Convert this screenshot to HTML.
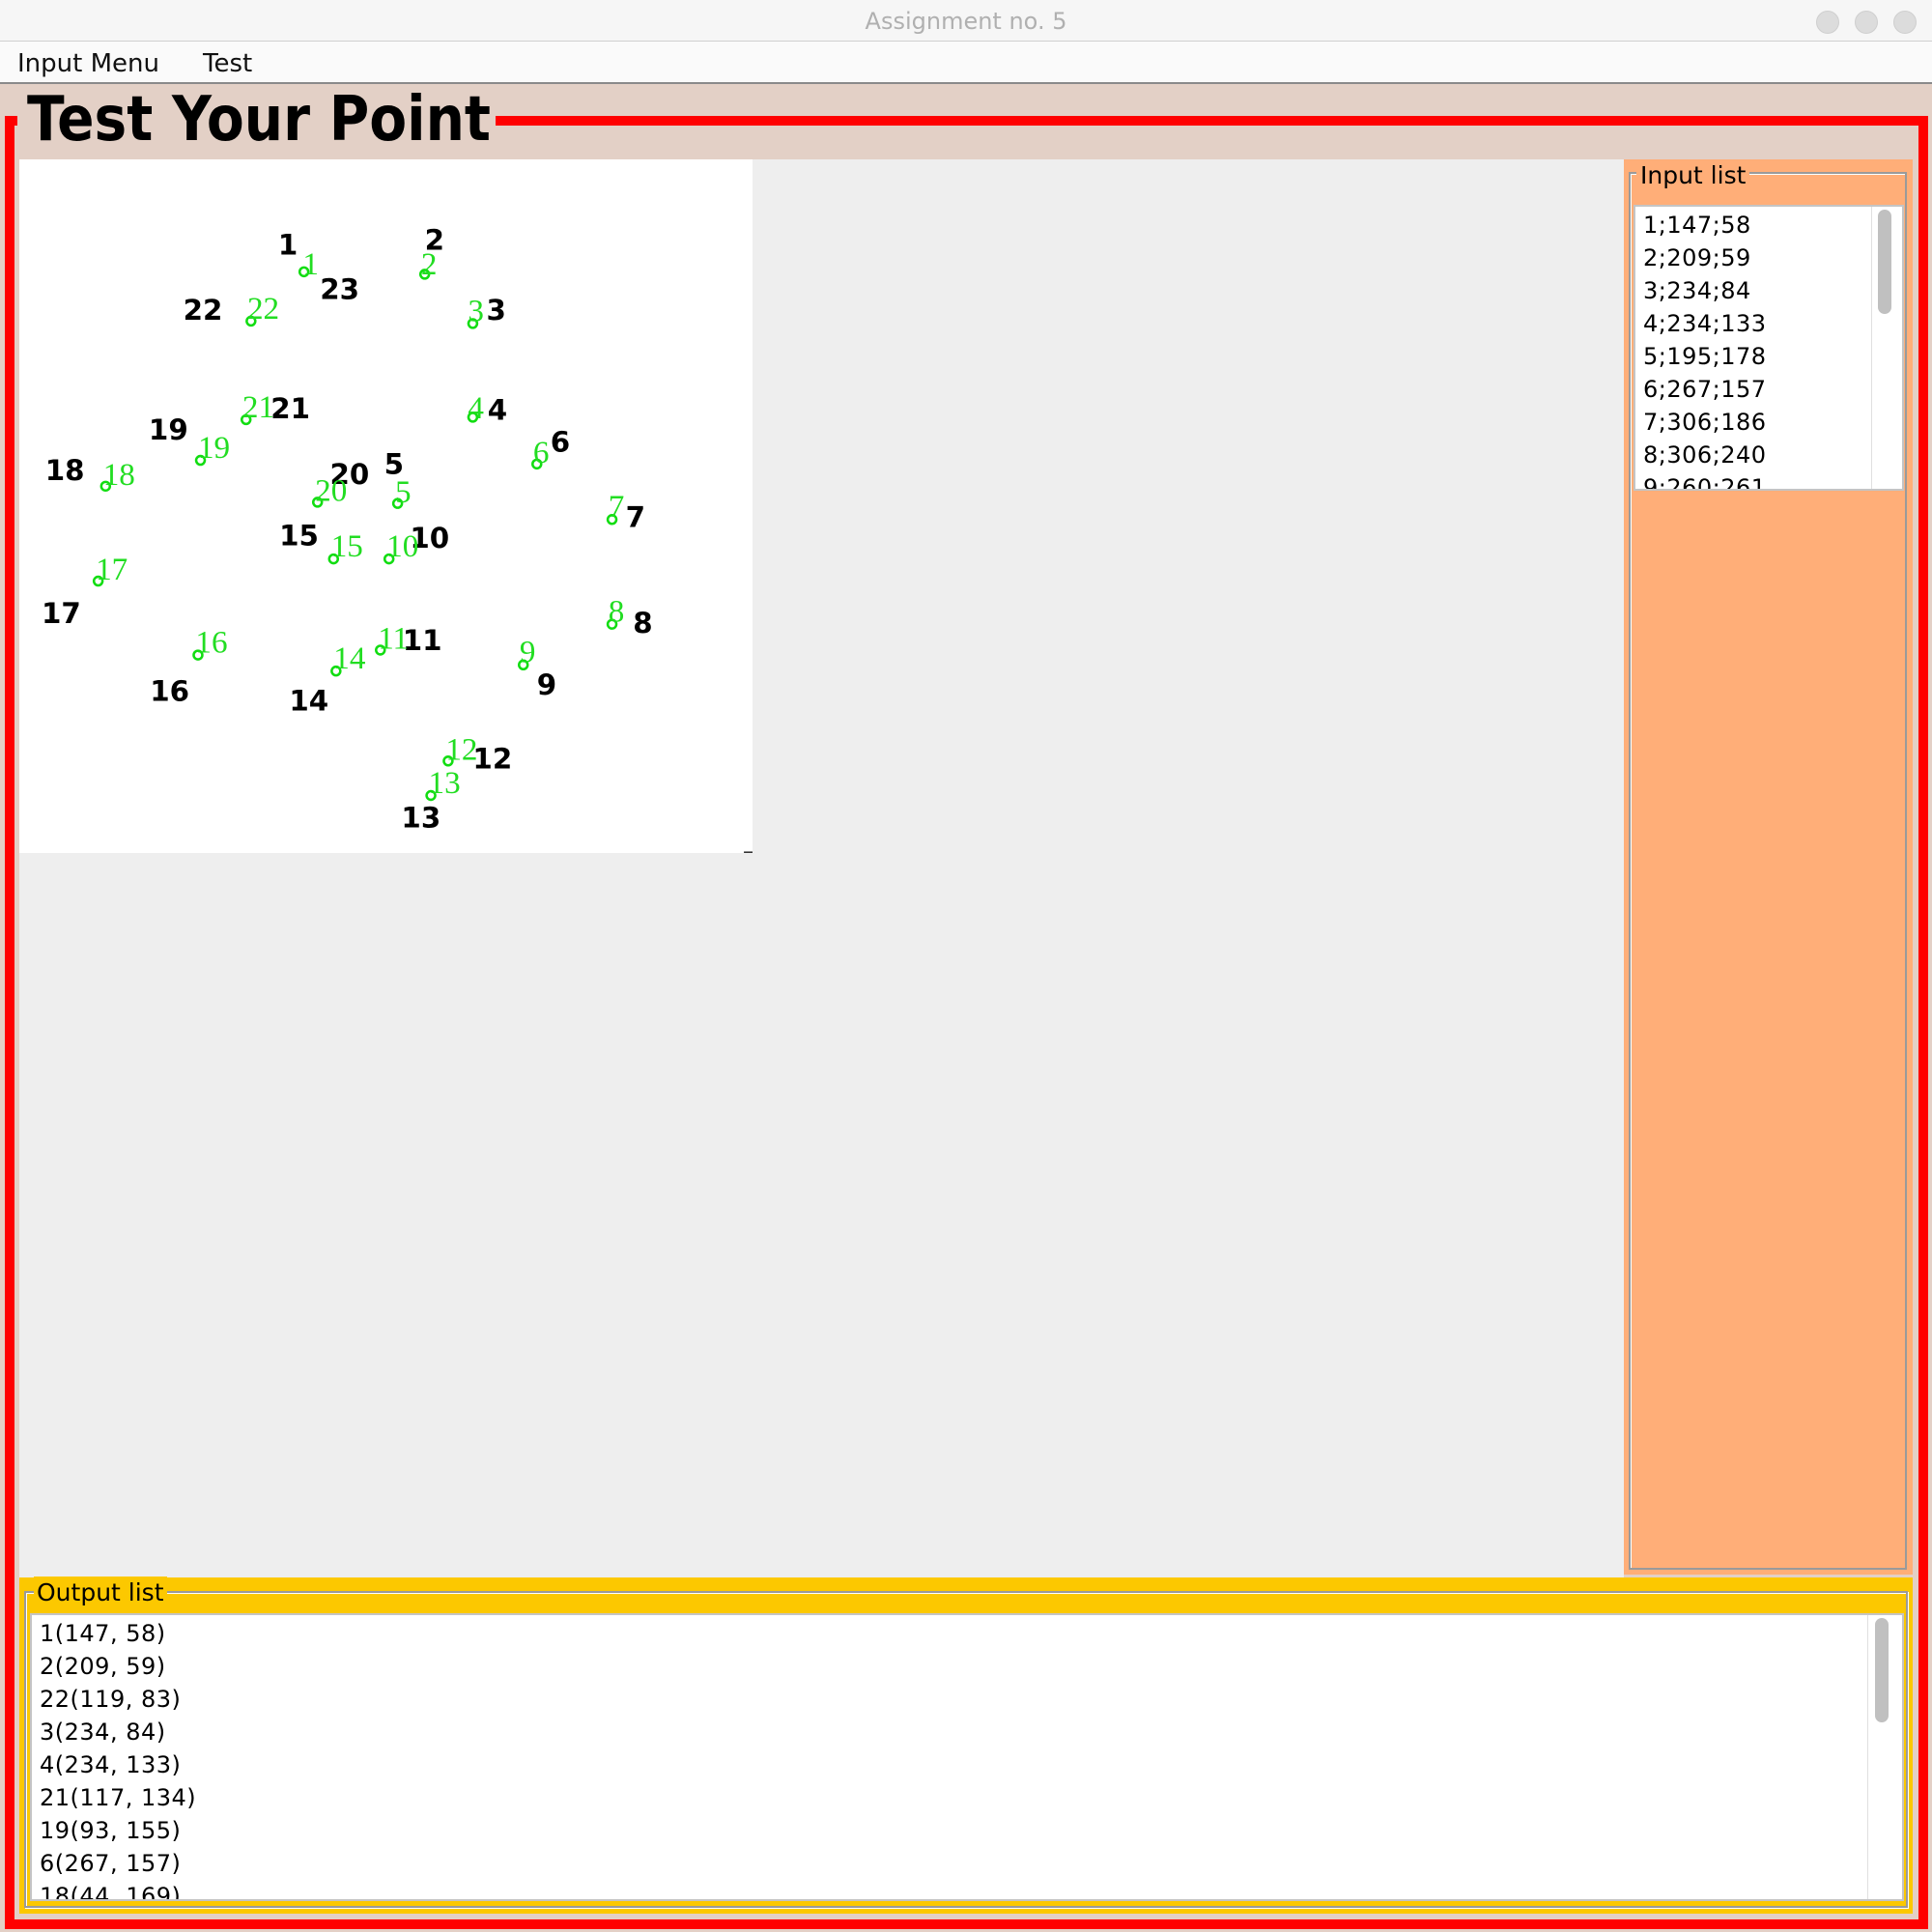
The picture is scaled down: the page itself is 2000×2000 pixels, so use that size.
<!DOCTYPE html>
<html><head><meta charset="utf-8"><style>
*{margin:0;padding:0;box-sizing:border-box}
body{width:2000px;height:2000px;position:relative;background:#e3d0c6;font-family:"DejaVu Sans","Liberation Sans",sans-serif;overflow:hidden}
.a{position:absolute}
.tb{left:0;top:0;width:2000px;height:43px;background:#f6f6f6;border-bottom:1px solid #d0d0d0;text-align:center;color:#b0b0b0;font-size:24px;line-height:44px}
.dot{width:24px;height:24px;border-radius:50%;background:#dcdcdc;top:11px;border:1px solid #cfcfcf}
.mb{left:0;top:43px;width:2000px;height:44px;background:#fafafa;border-bottom:2px solid #8a8a8a;font-size:26px;line-height:46px;color:#111}
.list{background:#fff;border:2px solid #c4c4c4;font-size:24px;line-height:34px;color:#000;overflow:hidden;padding-left:8px;letter-spacing:0.5px}
.thumb{background:#c0c0c0;border-radius:8px;width:14px}
</style></head><body>
<div class="a tb">Assignment no. 5</div>
<div class="a dot" style="left:1880px"></div>
<div class="a dot" style="left:1920px"></div>
<div class="a dot" style="left:1960px"></div>
<div class="a mb"><span class="a" style="left:18px">Input Menu</span><span class="a" style="left:210px">Test</span></div>

<div class="a" style="left:5px;top:120px;width:1991px;height:1877px;border:10px solid #ff0000"></div>
<div class="a" style="left:18px;top:112px;width:495px;height:45px;background:#e3d0c6"></div>
<div class="a" style="left:28px;top:84px;font-size:64px;font-weight:bold;line-height:80px;color:#000;transform:scaleX(0.885);transform-origin:0 0;white-space:nowrap">Test Your Point</div>

<div class="a" style="left:20px;top:165px;width:1661px;height:1468px;background:#eeeeee"></div>
<div class="a" style="left:20px;top:165px;width:759px;height:718px;background:#fff"></div>
<svg class="a" style="left:20px;top:165px" width="759" height="720" viewBox="16 129 595 564">
<g font-family="DejaVu Sans,sans-serif" font-weight="bold" font-size="23" fill="#000" text-anchor="middle">
<text x="234" y="206">1</text><text x="353" y="202">2</text><text x="276" y="242">23</text><text x="165" y="259">22</text><text x="403" y="259">3</text><text x="236" y="339">21</text><text x="404" y="340">4</text><text x="137" y="356">19</text><text x="455" y="366">6</text><text x="53" y="389">18</text><text x="284" y="392">20</text><text x="320" y="384">5</text><text x="516" y="427">7</text><text x="243" y="442">15</text><text x="349" y="444">10</text><text x="50" y="505">17</text><text x="522" y="513">8</text><text x="343" y="527">11</text><text x="444" y="563">9</text><text x="138" y="568">16</text><text x="251" y="576">14</text><text x="400" y="623">12</text><text x="342" y="671">13</text>
</g>
<g fill="none" stroke="#11dd11" stroke-width="2">
<circle cx="247" cy="220" r="3.5"/><circle cx="345" cy="222" r="3.5"/><circle cx="204" cy="260" r="3.5"/><circle cx="384" cy="262" r="3.5"/><circle cx="200" cy="340" r="3.5"/><circle cx="384" cy="338" r="3.5"/><circle cx="163" cy="373" r="3.5"/><circle cx="436" cy="376" r="3.5"/><circle cx="86" cy="394" r="3.5"/><circle cx="258" cy="407" r="3.5"/><circle cx="323" cy="408" r="3.5"/><circle cx="497" cy="421" r="3.5"/><circle cx="271" cy="453" r="3.5"/><circle cx="316" cy="453" r="3.5"/><circle cx="80" cy="471" r="3.5"/><circle cx="497" cy="506" r="3.5"/><circle cx="161" cy="531" r="3.5"/><circle cx="273" cy="544" r="3.5"/><circle cx="309" cy="527" r="3.5"/><circle cx="425" cy="539" r="3.5"/><circle cx="364" cy="617" r="3.5"/><circle cx="350" cy="645" r="3.5"/>
</g>
<g font-family="Liberation Serif,serif" font-size="26" fill="#22dd22">
<text x="246" y="222">1</text><text x="342" y="222">2</text><text x="201" y="258">22</text><text x="380" y="260">3</text><text x="197" y="338">21</text><text x="380" y="339">4</text><text x="161" y="371">19</text><text x="433" y="375">6</text><text x="84" y="393">18</text><text x="256" y="406">20</text><text x="321" y="407">5</text><text x="494" y="419">7</text><text x="269" y="451">15</text><text x="314" y="451">10</text><text x="78" y="470">17</text><text x="494" y="504">8</text><text x="159" y="529">16</text><text x="271" y="542">14</text><text x="307" y="526">11</text><text x="422" y="537">9</text><text x="362" y="616">12</text><text x="348" y="643">13</text>
</g>
<line x1="604" y1="691" x2="611" y2="691" stroke="#000"/>
</svg>

<div class="a" style="left:1681px;top:165px;width:299px;height:1465px;background:#ffae78"></div>
<div class="a" style="left:1686px;top:178px;width:288px;height:1447px;border:2px solid #9a9a9a;box-shadow:inset 1px 1px 0 #fff"></div>
<div class="a" style="left:1694px;top:165px;padding:0 4px;background:#ffae78;font-size:25px;line-height:34px">Input list</div>
<div class="a list" style="left:1691px;top:212px;width:280px;height:296px;padding-top:2px">
1;147;58<br>2;209;59<br>3;234;84<br>4;234;133<br>5;195;178<br>6;267;157<br>7;306;186<br>8;306;240<br>9;260;261</div>
<div class="a" style="left:1937px;top:214px;width:1px;height:292px;background:#e0e0e0"></div>
<div class="a thumb" style="left:1944px;top:217px;height:108px"></div>

<div class="a" style="left:20px;top:1633px;width:1960px;height:348px;background:#fcc800"></div>
<div class="a" style="left:25px;top:1647px;width:1950px;height:328px;border:2px solid #9a9a9a;box-shadow:inset 1px 1px 0 #fff,1px 1px 0 #fff"></div>
<div class="a" style="left:35px;top:1632px;padding:0 3px;background:#fcc800;font-size:25px;line-height:34px">Output list</div>
<div class="a list" style="left:31px;top:1670px;width:1940px;height:298px;padding-top:2px">
1(147, 58)<br>2(209, 59)<br>22(119, 83)<br>3(234, 84)<br>4(234, 133)<br>21(117, 134)<br>19(93, 155)<br>6(267, 157)<br>18(44, 169)</div>
<div class="a" style="left:1933px;top:1672px;width:1px;height:294px;background:#e0e0e0"></div>
<div class="a thumb" style="left:1941px;top:1675px;height:108px"></div>
</body></html>
